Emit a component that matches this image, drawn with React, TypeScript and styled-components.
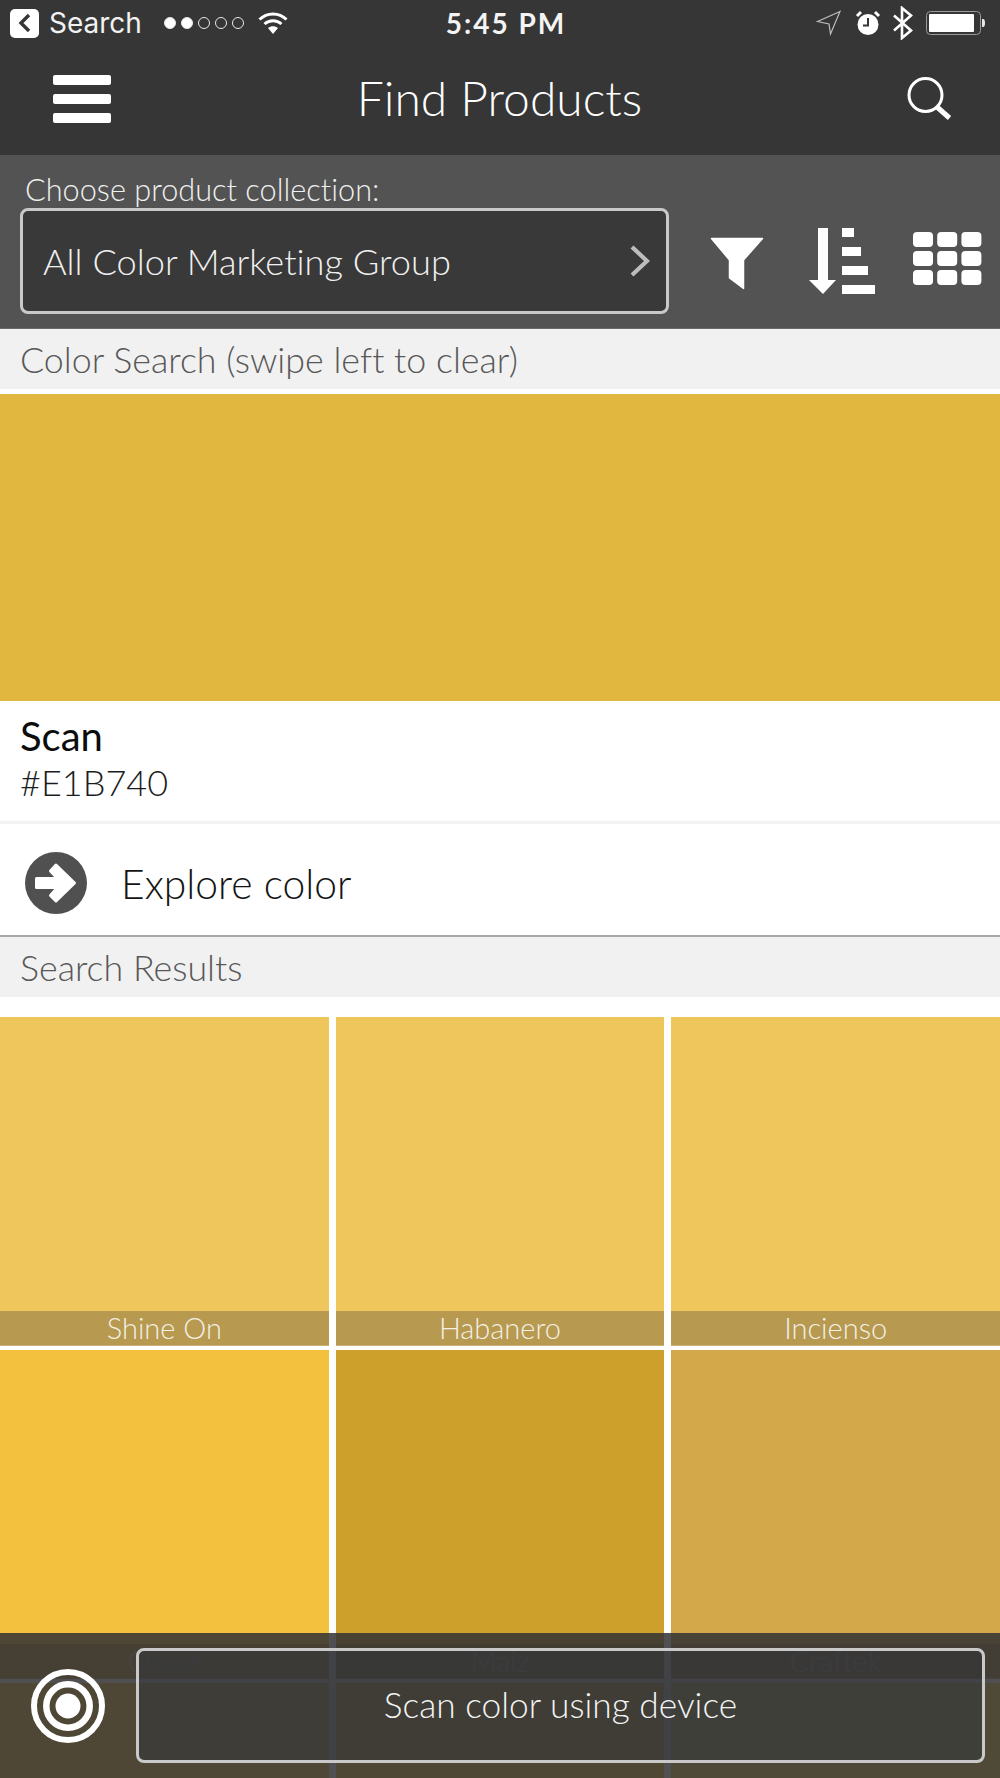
import React from "react";
import styled, { createGlobalStyle } from "styled-components";

const GlobalStyle = createGlobalStyle`
  html, body {
    margin: 0;
    padding: 0;
    background: #ffffff;
  }
  * {
    box-sizing: border-box;
  }
`;

const Page = styled.div`
  position: relative;
  width: 1000px;
  height: 1778px;
  overflow: hidden;
  background: #ffffff;
  font-family: "Lato", "Liberation Sans", sans-serif;
  font-weight: 300;
  font-variant-ligatures: none;
`;

const TopArea = styled.div`
  height: 155px;
  background: #363636;
  display: flex;
  flex-direction: column;
`;

const StatusBar = styled.div`
  height: 46px;
  padding: 0 14px 0 10px;
  display: grid;
  grid-template-columns: 1fr auto 1fr;
  align-items: center;
  color: #ffffff;
`;

const StatusLeft = styled.div`
  display: flex;
  align-items: center;
`;

const StatusRight = styled.div`
  display: flex;
  align-items: center;
  justify-content: flex-end;
`;

const BackBadge = styled.div`
  width: 29px;
  height: 29px;
  border-radius: 5px;
  background: #ffffff;
  display: flex;
  align-items: center;
  justify-content: center;
`;

const CarrierText = styled.span`
  margin-left: 10px;
  font-family: "Inter", "Liberation Sans", sans-serif;
  font-size: 28px;
  font-weight: 400;
  color: #f2f2f2;
`;

const Dots = styled.div`
  margin-left: 22px;
  display: flex;
  gap: 5px;
`;

const Dot = styled.span<{ $on?: boolean }>`
  width: 12px;
  height: 12px;
  border-radius: 50%;
  border: 1px solid #e8e8e8;
  background: ${(p) => (p.$on ? "#ffffff" : "transparent")};
`;

const TimeText = styled.span`
  margin-left: 16px;
  font-family: "Lato", "Inter", sans-serif;
  font-size: 28px;
  font-weight: 700;
  letter-spacing: 2px;
  color: #f4f4f4;
`;

const StatusIcon = styled.svg<{ $ml?: number }>`
  display: block;
  flex: none;
  margin-left: ${(p) => p.$ml || 0}px;
`;

const NavBar = styled.div`
  flex: 1;
  padding: 0 48px 3px 53px;
  display: grid;
  grid-template-columns: 1fr auto 1fr;
  align-items: center;
`;

const Hamburger = styled.div`
  width: 58px;
  display: flex;
  flex-direction: column;
  gap: 9px;
`;

const HamburgerBar = styled.span`
  height: 10px;
  border-radius: 2px;
  background: #ffffff;
`;

const Title = styled.div`
  margin: 0 0 3px -6px;
  font-size: 48px;
  line-height: 56px;
  color: #ffffff;
`;

const NavSearch = styled.svg`
  display: block;
  justify-self: end;
`;

const FilterBar = styled.div`
  height: 174px;
  padding: 16px 0 0 20px;
  background: #535353;
  border-bottom: 1px solid #6b6b6b;
`;

const FilterLabel = styled.div`
  padding-left: 5px;
  font-size: 30.7px;
  line-height: 37px;
  color: #f0f0f0;
`;

const FilterRow = styled.div`
  display: flex;
  align-items: flex-start;
`;

const SelectBox = styled.div`
  width: 649px;
  height: 106px;
  padding: 0 16px 0 20px;
  border: 3px solid #c9c9c9;
  border-radius: 8px;
  background: #393939;
  display: flex;
  align-items: center;
  justify-content: space-between;
  font-size: 36.2px;
  color: #f0f0f0;
`;

const ToolIcon = styled.svg<{ $ml: number; $mt: number }>`
  display: block;
  flex: none;
  margin-left: ${(p) => p.$ml}px;
  margin-top: ${(p) => p.$mt}px;
`;

const SectionHeader = styled.div`
  height: 60px;
  padding-left: 20px;
  background: #f1f1f1;
  display: flex;
  align-items: center;
  font-size: 35.8px;
  color: #585858;
`;

const Swatch = styled.div`
  height: 307px;
  margin-top: 5px;
  background: #e1b740;
`;

const ColorInfo = styled.div`
  height: 123px;
  padding: 11px 20px 0;
  border-bottom: 3px solid #f2f2f2;
`;

const ColorName = styled.div`
  font-size: 40px;
  line-height: 48px;
  font-weight: 400;
  color: #0c0c0c;
`;

const ColorHex = styled.div`
  font-size: 36px;
  line-height: 44px;
  color: #1c1c1c;
`;

const ExploreRow = styled.div`
  height: 113px;
  padding: 7px 0 0 25px;
  border-bottom: 2px solid #a8a8a8;
  display: flex;
  align-items: center;
`;

const ExploreText = styled.span`
  margin-left: 34px;
  font-size: 40.8px;
  color: #141414;
`;

const ResultGrid = styled.div`
  margin-top: 20px;
  display: grid;
  grid-template-columns: repeat(3, 1fr);
  grid-auto-rows: 329px;
  column-gap: 7px;
  row-gap: 4px;
`;

const Tile = styled.div<{ $color: string }>`
  background: ${(p) => p.$color};
  display: flex;
  flex-direction: column;
  justify-content: flex-end;
`;

const TileLabel = styled.div<{ $muted?: boolean }>`
  height: 35px;
  background: rgba(15, 20, 40, 0.25);
  border-bottom: 1px solid rgba(255, 255, 255, 0.25);
  font-size: 29px;
  line-height: 34px;
  text-align: center;
  color: ${(p) => (p.$muted ? "#b4b4a8" : "#f3f0e6")};
`;

const ScanFooter = styled.div`
  position: absolute;
  left: 0;
  right: 0;
  bottom: 0;
  height: 145px;
  padding: 15px 15px 15px 31px;
  background: rgba(49, 49, 52, 0.85);
  display: flex;
  align-items: center;
`;

const ScanTarget = styled.svg`
  display: block;
  flex: none;
`;

const ScanButton = styled.div`
  flex: 1;
  height: 115px;
  margin-left: 31px;
  padding-bottom: 2px;
  border: 3px solid #c9c9c9;
  border-radius: 8px;
  background: rgba(48, 52, 58, 0.5);
  display: flex;
  align-items: center;
  justify-content: center;
  font-size: 35.3px;
  color: #f4f4f4;
`;

const tiles = [
  { name: "Shine On", color: "#efc65c" },
  { name: "Habanero", color: "#efc65c" },
  { name: "Incienso", color: "#efc65c" },
  { name: "Oscar", color: "#f3c13e", muted: true },
  { name: "Maiz", color: "#cda02c", muted: true },
  { name: "Craftek", color: "#d2a84a", muted: true },
  { name: "", color: "#f0c040" },
  { name: "", color: "#edc030" },
  { name: "", color: "#f6d550" },
];

function App() {
  return (
    <Page>
      <GlobalStyle />
      <TopArea>
        <StatusBar>
          <StatusLeft>
            <BackBadge>
              <svg width="14" height="20" viewBox="0 0 14 20">
                <path d="M11 2 L3 10 L11 18" fill="none" stroke="#363636" strokeWidth="3.4" />
              </svg>
            </BackBadge>
            <CarrierText>Search</CarrierText>
            <Dots>
              <Dot $on />
              <Dot $on />
              <Dot />
              <Dot />
              <Dot />
            </Dots>
            <StatusIcon $ml={14} width="30" height="24" viewBox="0 0 30 24">
              <path d="M1.5 8.5 C9 1 21 1 28.5 8.5" fill="none" stroke="#fff" strokeWidth="3" />
              <path d="M6.5 13 C11.5 8.5 18.5 8.5 23.5 13" fill="none" stroke="#fff" strokeWidth="3" />
              <path d="M10 17 L15 23 L20 17 C17 14.5 13 14.5 10 17 Z" fill="#fff" />
            </StatusIcon>
          </StatusLeft>
          <TimeText>5:45 PM</TimeText>
          <StatusRight>
            <StatusIcon width="26" height="26" viewBox="0 0 26 26">
              <path d="M24 1.5 L1.5 11.5 L13 14 L14.5 24 Z" fill="none" stroke="#bdbdbd" strokeWidth="1.2" />
            </StatusIcon>
            <StatusIcon $ml={13} width="26" height="26" viewBox="0 0 26 26">
              <circle cx="13" cy="14.5" r="10.5" fill="#fff" />
              <path d="M13 8 V15.5 H8" fill="none" stroke="#363636" strokeWidth="2" />
              <path d="M2 6 L6 2 M24 6 L20 2" stroke="#fff" strokeWidth="3" />
            </StatusIcon>
            <StatusIcon $ml={11} width="22" height="34" viewBox="0 0 22 34">
              <path d="M2 9.5 L19 24.5 L10 32 V2 L19 9.5 L2 24.5" fill="none" stroke="#fff" strokeWidth="2.6" />
            </StatusIcon>
            <StatusIcon $ml={12} width="60" height="24" viewBox="0 0 60 24">
              <rect x="0.5" y="0.5" width="54" height="23" rx="4" fill="none" stroke="#9a9a9a" />
              <rect x="3" y="3" width="45" height="18" rx="1" fill="#fff" />
              <path d="M56 8 H57 Q59 8 59 12 Q59 16 57 16 H56 Z" fill="#e8e8e8" />
            </StatusIcon>
          </StatusRight>
        </StatusBar>
        <NavBar>
          <Hamburger>
            <HamburgerBar />
            <HamburgerBar />
            <HamburgerBar />
          </Hamburger>
          <Title>Find Products</Title>
          <NavSearch width="46" height="44" viewBox="0 0 46 44">
            <circle cx="19.5" cy="18" r="16.5" fill="none" stroke="#fff" strokeWidth="3" />
            <path d="M31 30 L43.5 41" fill="none" stroke="#fff" strokeWidth="5" />
          </NavSearch>
        </NavBar>
      </TopArea>

      <FilterBar>
        <FilterLabel>Choose product collection:</FilterLabel>
        <FilterRow>
          <SelectBox>
            <span>All Color Marketing Group</span>
            <svg width="20" height="32" viewBox="0 0 20 32">
              <path d="M2 2 L17 16 L2 30" fill="none" stroke="#bdbdbd" strokeWidth="4.2" />
            </svg>
          </SelectBox>
          <ToolIcon $ml={41} $mt={29} width="54" height="54" viewBox="0 0 54 54">
            <path
              d="M1.5 1.5 H52.5 L33.5 23 V51.5 L19.5 41 V23 Z"
              fill="#fff"
              stroke="#fff"
              strokeWidth="1.5"
              strokeLinejoin="round"
            />
          </ToolIcon>
          <ToolIcon $ml={45} $mt={20} width="67" height="66" viewBox="0 0 67 66">
            <path d="M9 0 H19 V52 H27 L14 66 L0 52 H9 Z" fill="#fff" />
            <rect x="33" y="0" width="12" height="9" fill="#fff" />
            <rect x="33" y="19" width="19" height="9" fill="#fff" />
            <rect x="33" y="38" width="26" height="9" fill="#fff" />
            <rect x="33" y="57" width="33" height="9" fill="#fff" />
          </ToolIcon>
          <ToolIcon $ml={37} $mt={24} width="69" height="53" viewBox="0 0 69 53">
            {[0, 24.2, 48.4].map((x) =>
              [0, 19, 38].map((y) => (
                <rect key={`${x}-${y}`} x={x} y={y} width="20" height="15" rx="4" fill="#fff" />
              ))
            )}
          </ToolIcon>
        </FilterRow>
      </FilterBar>

      <SectionHeader>Color Search (swipe left to clear)</SectionHeader>
      <Swatch />
      <ColorInfo>
        <ColorName>Scan</ColorName>
        <ColorHex>#E1B740</ColorHex>
      </ColorInfo>
      <ExploreRow>
        <svg width="62" height="62" viewBox="0 0 62 62">
          <circle cx="31" cy="31" r="31" fill="#505050" />
          <path
            d="M11.5 26.5 H32.5 L25.5 19 L31 13 L49.5 31 L31 49 L25.5 43.5 L32.5 35.5 H11.5 Z"
            fill="#fff"
            stroke="#fff"
            strokeWidth="3"
            strokeLinejoin="round"
          />
        </svg>
        <ExploreText>Explore color</ExploreText>
      </ExploreRow>
      <SectionHeader>Search Results</SectionHeader>

      <ResultGrid>
        {tiles.map((tile, i) => (
          <Tile key={i} $color={tile.color}>
            <TileLabel $muted={tile.muted}>{tile.name}</TileLabel>
          </Tile>
        ))}
      </ResultGrid>

      <ScanFooter>
        <ScanTarget width="74" height="74" viewBox="0 0 74 74">
          <circle cx="37" cy="37" r="34" fill="none" stroke="#fff" strokeWidth="6" />
          <circle cx="37" cy="37" r="21.7" fill="none" stroke="#fff" strokeWidth="6.5" />
          <circle cx="37" cy="37" r="12.5" fill="#fff" />
        </ScanTarget>
        <ScanButton>Scan color using device</ScanButton>
      </ScanFooter>
    </Page>
  );
}

export default App;
